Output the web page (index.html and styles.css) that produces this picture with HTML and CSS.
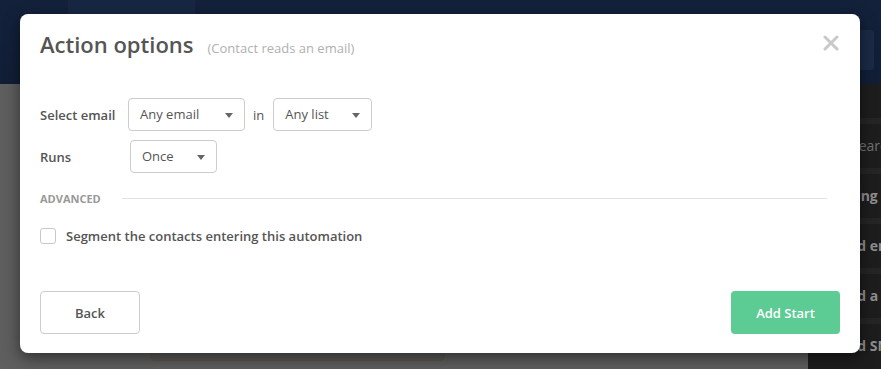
FILE: index.html
```html
<!DOCTYPE html>
<html>
  <head>
    <title>Action options</title>
    <link rel="stylesheet" href="styles.css">
  </head>
  <body>
    <div class="page">
      <div class="topbar">
        <div class="topbar-tab"></div>
        <div class="topbar-button"></div>
      </div>

      <div class="main">
        <div class="canvas">
          <div class="canvas-card"></div>
        </div>
        <div class="sidebar">
          <div class="sidebar-item search-item">Search</div>
          <div class="sidebar-item item-wide">Adding Contacts</div>
          <div class="sidebar-item">Send email</div>
          <div class="sidebar-item">Send a survey</div>
          <div class="sidebar-item">Send SMS</div>
        </div>
      </div>
    </div>

    <div class="modal">
      <div class="modal-header">
        <h2>Action options</h2>
        <span class="modal-subtitle">(Contact reads an email)</span>
        <span class="modal-close">
          <svg width="16" height="16" viewBox="0 0 16 16">
            <path d="M2 2 L14 14 M14 2 L2 14" stroke="#c9c9c9" stroke-width="3" stroke-linecap="round" />
          </svg>
        </span>
      </div>

      <div class="form">
        <div class="form-row">
          <label>Select email</label>
          <div class="select select-email">Any email <span class="caret"></span></div>
          <span class="form-in">in</span>
          <div class="select select-list">Any list <span class="caret"></span></div>
        </div>
        <div class="form-row">
          <label class="label-wide">Runs</label>
          <div class="select select-runs">Once <span class="caret"></span></div>
        </div>
      </div>

      <div class="divider">
        <span>Advanced</span>
        <div class="divider-line"></div>
      </div>

      <div class="check-row">
        <span class="checkbox"></span>
        <span class="check-label">Segment the contacts entering this automation</span>
      </div>

      <div class="modal-footer">
        <button class="btn btn-back">Back</button>
        <button class="btn btn-start">Add Start</button>
      </div>
    </div>
  </body>
</html>
```

FILE: styles.css
```css
body {
  margin: 0;
  font-family: "Open Sans", "Liberation Sans", sans-serif;
  background-color: #5e5e5e;
  overflow: hidden;
}
.page {
  display: flex;
  flex-direction: column;
  height: 369px;
  overflow: hidden;
}
.topbar {
  display: flex;
  align-items: flex-start;
  height: 84px;
  flex-shrink: 0;
  background-color: #12203a;
  background-image: linear-gradient(180deg, #13213b 0%, #111e36 100%);
}
.topbar-tab {
  margin-left: 68px;
  width: 127px;
  height: 84px;
  background-color: #172743;
}
.topbar-button {
  margin-left: auto;
  margin-right: 7px;
  margin-top: 30px;
  width: 40px;
  height: 40px;
  border-radius: 4px;
  background-color: #1b2a46;
}
.main {
  display: flex;
  flex: 1;
  min-height: 0;
  overflow: hidden;
}
.canvas {
  flex: 1;
}
.canvas-card {
  margin-left: 150px;
  margin-top: 216px;
  width: 293px;
  height: 59px;
  border: 1px solid #5f5644;
  border-radius: 5px;
  background-color: #595959;
}
.sidebar {
  width: 73px;
  background-color: #1d1d1d;
  overflow: hidden;
  padding-top: 34px;
}
.sidebar-item {
  padding-left: 24px;
  height: 44px;
  line-height: 44px;
  border-top: 6px solid #252525;
  white-space: nowrap;
  overflow: hidden;
  font-size: 14px;
  font-weight: 700;
  color: #8e8e8e;
}
.search-item {
  padding-left: 43px;
  font-weight: 400;
  color: #707070;
}
.item-wide {
  padding-left: 21px;
}

.modal {
  position: absolute;
  left: 20px;
  top: 14px;
  width: 840px;
  height: 339px;
  box-sizing: border-box;
  padding: 16px 20px 19px 20px;
  display: flex;
  flex-direction: column;
  background-color: #fff;
  border-radius: 8px;
  box-shadow: 0 5px 15px rgba(0, 0, 0, 0.5);
}
.modal-header {
  display: flex;
  align-items: baseline;
}
.modal-header h2 {
  margin: 0;
  font-size: 22px;
  line-height: 28px;
  font-weight: 600;
  color: #555;
}
.modal-subtitle {
  margin-left: 14px;
  font-size: 13px;
  color: #b0b0b0;
}
.modal-close {
  margin-left: auto;
  align-self: flex-start;
  margin-top: 4px;
  margin-right: 1px;
  height: 16px;
}
.form {
  display: flex;
  flex-direction: column;
  gap: 9px;
  margin-top: 40px;
}
.form-row {
  display: flex;
  align-items: center;
}
.form-row label {
  width: 88px;
  font-size: 13px;
  font-weight: 600;
  color: #555;
}
.form-row .label-wide {
  width: 90px;
}
.select {
  position: relative;
  box-sizing: border-box;
  height: 33px;
  line-height: 31px;
  padding-left: 11px;
  border: 1px solid #ccc;
  border-radius: 4px;
  font-size: 13px;
  color: #555;
}
.select-email {
  width: 117px;
}
.select-list {
  width: 99px;
}
.select-runs {
  width: 87px;
}
.caret {
  position: absolute;
  right: 11px;
  top: 14px;
  width: 0;
  height: 0;
  border-left: 4px solid transparent;
  border-right: 4px solid transparent;
  border-top: 5px solid #666;
}
.form-in {
  margin: 0 9px 0 8px;
  font-size: 13px;
  color: #555;
}
.divider {
  display: flex;
  align-items: center;
  margin-top: 18px;
  padding-right: 13px;
}
.divider span {
  font-size: 11px;
  line-height: 15px;
  font-weight: 700;
  text-transform: uppercase;
  color: #999;
}
.divider-line {
  flex: 1;
  margin-left: 21px;
  height: 1px;
  background-color: #e2e2e2;
}
.check-row {
  display: flex;
  align-items: center;
  margin-top: 21px;
}
.checkbox {
  box-sizing: border-box;
  width: 16px;
  height: 16px;
  border: 1px solid #c8c8c8;
  border-radius: 3px;
}
.check-label {
  margin-left: 10px;
  font-size: 13px;
  font-weight: 600;
  color: #555;
}
.modal-footer {
  margin-top: auto;
  display: flex;
  justify-content: space-between;
}
.btn {
  height: 43px;
  border-radius: 4px;
  font-family: "Open Sans", "Liberation Sans", sans-serif;
  font-size: 13px;
  font-weight: 600;
  cursor: pointer;
}
.btn-back {
  width: 100px;
  border: 1px solid #ccc;
  background-color: #fff;
  color: #555;
}
.btn-start {
  width: 109px;
  border: none;
  background-color: #5ccb94;
  color: #fff;
}
```
